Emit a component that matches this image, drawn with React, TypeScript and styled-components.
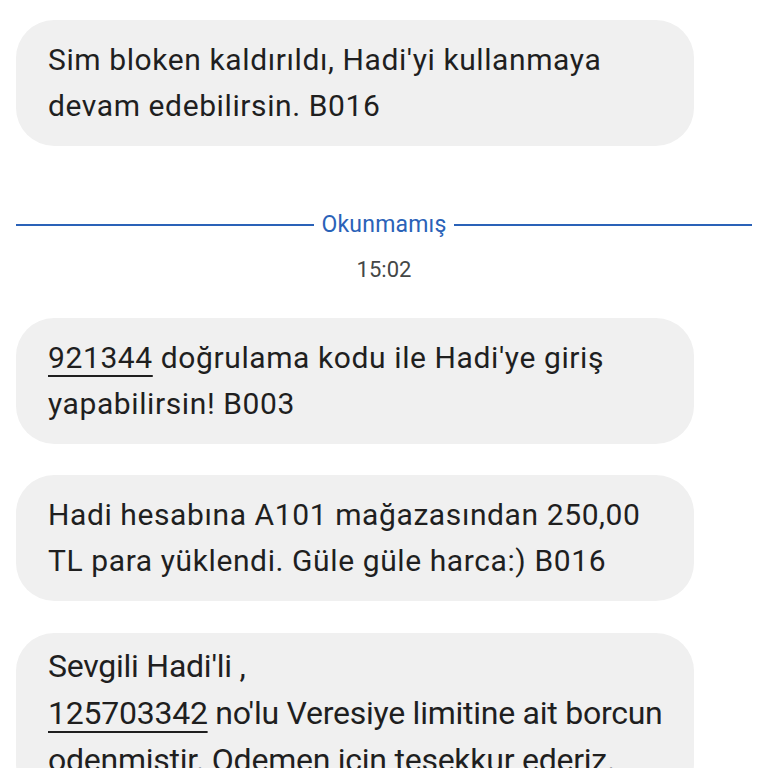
import React from "react";
import styled, { createGlobalStyle } from "styled-components";

const GlobalStyle = createGlobalStyle`
  body {
    margin: 0;
    background: #ffffff;
    font-family: Roboto, "Noto Sans", sans-serif;
    color: #1f1f1f;
  }
`;

const Thread = styled.div`
  display: flex;
  flex-direction: column;
  padding: 20px 16px 0;
  height: 768px;
  overflow: hidden;
  box-sizing: border-box;
`;

const Bubble = styled.div<{ $gapAfter?: number; $tall?: boolean }>`
  width: 678px;
  box-sizing: border-box;
  background: #f0f0f0;
  border-radius: 38px;
  padding: ${(p) => (p.$tall ? "10px 32px 17px" : "17px 32px")};
  margin-bottom: ${(p) => p.$gapAfter ?? 32}px;
  font-size: ${(p) => (p.$tall ? 32 : 30)}px;
  line-height: ${(p) => (p.$tall ? 47 : 46)}px;
  letter-spacing: ${(p) => (p.$tall ? "-0.25px" : "0.6px")};
  white-space: nowrap;
`;

const Line = styled.div``;

const Code = styled.span`
  text-decoration: underline;
  text-decoration-thickness: 2px;
  text-underline-offset: 7px;
`;

const Divider = styled.div`
  display: flex;
  align-items: center;
  gap: 7px;
  margin: 66px 0 0;
  width: 736px;
  color: #2a62b8;
  font-size: 23px;
  line-height: 26px;
  letter-spacing: 0.2px;
`;

const Rule = styled.div`
  flex: 1;
  height: 2px;
  background: #2a62b8;
`;

const Stamp = styled.div`
  width: 736px;
  text-align: center;
  color: #444746;
  font-size: 22px;
  line-height: 26px;
  margin: 19px 0 35px;
`;

export default function App() {
  return (
    <>
      <GlobalStyle />
      <Thread>
        <Bubble $gapAfter={0}>
          <Line>Sim bloken kaldırıldı, Hadi'yi kullanmaya</Line>
          <Line>devam edebilirsin. B016</Line>
        </Bubble>

        <Divider>
          <Rule />
          Okunmamış
          <Rule />
        </Divider>
        <Stamp>15:02</Stamp>

        <Bubble $gapAfter={31}>
          <Line>
            <Code>921344</Code> doğrulama kodu ile Hadi'ye giriş
          </Line>
          <Line>yapabilirsin! B003</Line>
        </Bubble>

        <Bubble $gapAfter={32}>
          <Line>Hadi hesabına A101 mağazasından 250,00</Line>
          <Line>TL para yüklendi. Güle güle harca:) B016</Line>
        </Bubble>

        <Bubble $tall>
          <Line>Sevgili Hadi'li ,</Line>
          <Line>
            <Code>125703342</Code> no'lu Veresiye limitine ait borcun
          </Line>
          <Line>odenmistir. Odemen icin tesekkur ederiz.</Line>
        </Bubble>
      </Thread>
    </>
  );
}
